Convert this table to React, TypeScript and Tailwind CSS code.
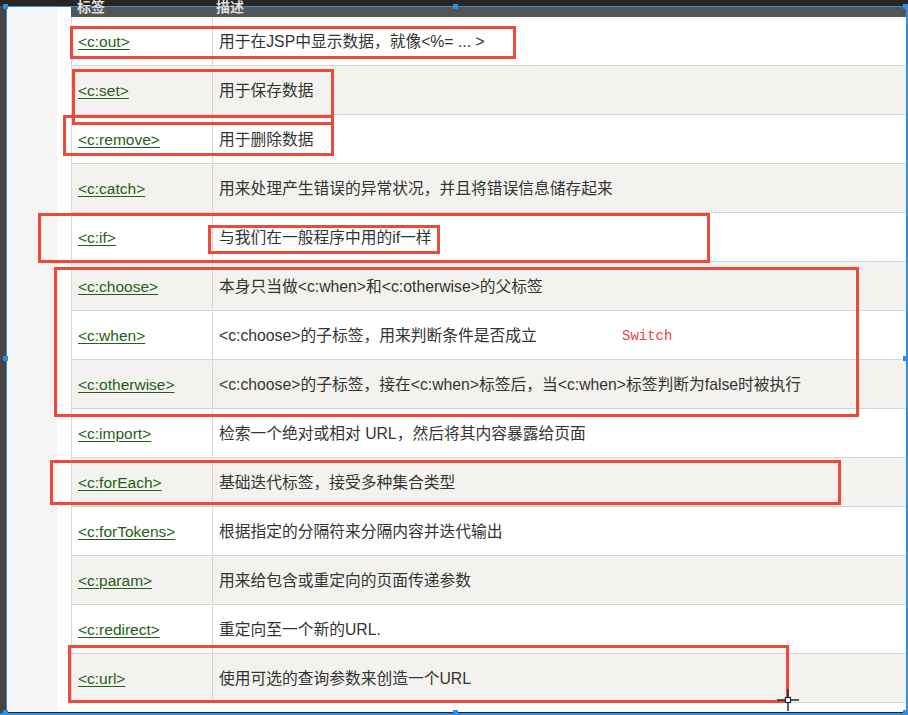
const rows: [string, string][] = [
  ['<c:out>', '用于在JSP中显示数据，就像<%= ... >'],
  ['<c:set>', '用于保存数据'],
  ['<c:remove>', '用于删除数据'],
  ['<c:catch>', '用来处理产生错误的异常状况，并且将错误信息储存起来'],
  ['<c:if>', '与我们在一般程序中用的if一样'],
  ['<c:choose>', '本身只当做<c:when>和<c:otherwise>的父标签'],
  ['<c:when>', '<c:choose>的子标签，用来判断条件是否成立'],
  ['<c:otherwise>', '<c:choose>的子标签，接在<c:when>标签后，当<c:when>标签判断为false时被执行'],
  ['<c:import>', '检索一个绝对或相对 URL，然后将其内容暴露给页面'],
  ['<c:forEach>', '基础迭代标签，接受多种集合类型'],
  ['<c:forTokens>', '根据指定的分隔符来分隔内容并迭代输出'],
  ['<c:param>', '用来给包含或重定向的页面传递参数'],
  ['<c:redirect>', '重定向至一个新的URL.'],
  ['<c:url>', '使用可选的查询参数来创造一个URL'],
]

// red annotation boxes drawn over the table: [left, top, width, height]
const marks: [number, number, number, number][] = [
  [70, 26, 446, 33],
  [72, 69, 262, 56],
  [63, 115, 271, 41],
  [38, 213, 672, 50],
  [208, 225, 232, 29],
  [54, 267, 805, 150],
  [50, 460, 791, 45],
  [68, 645, 721, 58],
]

const handles: [number, number][] = [
  [6, 6], [456, 6], [906, 6],
  [6, 358], [906, 358],
  [6, 712], [456, 712], [906, 712],
]

export default function App() {
  return (
    <div className="relative h-[715px] w-[908px] overflow-hidden bg-[#262626] font-['Liberation_Sans','Noto_Sans_CJK_SC',sans-serif]">
      <div className="flex h-full pt-[6px]">
        <div className="w-[6px] shrink-0 bg-[#454545]" />
        <div className="flex h-[706px] flex-1 border-l border-t border-r-2 border-[#2f8ee0] bg-white">
          <div className="w-[50px] shrink-0 bg-[#f5f5f5]" />
          <div className="w-[14px] shrink-0 bg-white" />
          <div className="flex flex-1 flex-col">
            <div className="flex h-[10px] bg-[#555555] text-sm font-bold text-[#dddddd]">
              <span className="w-[141px] -translate-y-[7px] pl-[6px] leading-none">标签</span>
              <span className="-translate-y-[7px] pl-[4px] leading-none">描述</span>
            </div>
            <div className="border-l border-[#d8d8d8]">
              {rows.map(([tag, desc], i) => (
                <div
                  key={tag}
                  className={`flex h-[49px] items-center border-b border-[#d6d6d6] pt-[1px] ${
                    i % 2 === 1 ? 'bg-[#f3f2ef]' : 'bg-white'
                  }`}
                >
                  <div className="flex h-full w-[141px] shrink-0 items-center border-r border-[#d6d6d6] pl-[6px]">
                    <a className="text-[15.5px] text-[#245e17] underline underline-offset-2">{tag}</a>
                  </div>
                  <div className="pl-[6px] text-[15.75px] text-[#333333]">{desc}</div>
                </div>
              ))}
            </div>
          </div>
        </div>
      </div>
      <div className="absolute bottom-0 left-0 h-[2px] w-full bg-[#2f8ee0]" />

      {marks.map(([x, y, w, h]) => (
        <div
          key={`${x}-${y}`}
          className="pointer-events-none absolute border-[3px] border-[#ef4a39]"
          style={{ left: x, top: y, width: w, height: h }}
        />
      ))}

      <span className="absolute left-[622px] top-[326px] font-['Liberation_Mono',monospace] text-sm text-[#e8453a]">
        Switch
      </span>

      {handles.map(([x, y]) => (
        <div
          key={`${x}-${y}`}
          className="absolute h-[5px] w-[5px] bg-[#2f8ee0]"
          style={{ left: x - 3, top: y - 2 }}
        />
      ))}

      {/* crosshair cursor */}
      <svg className="absolute left-[776px] top-[688px]" width="24" height="24" viewBox="0 0 24 24">
        <path d="M12 1v8M12 15v8M1 12h8M15 12h8" stroke="#1d2b3a" strokeWidth="1.5" />
        <rect x="9.5" y="9.5" width="5" height="5" fill="white" stroke="#1d2b3a" strokeWidth="1.2" />
      </svg>
    </div>
  )
}
